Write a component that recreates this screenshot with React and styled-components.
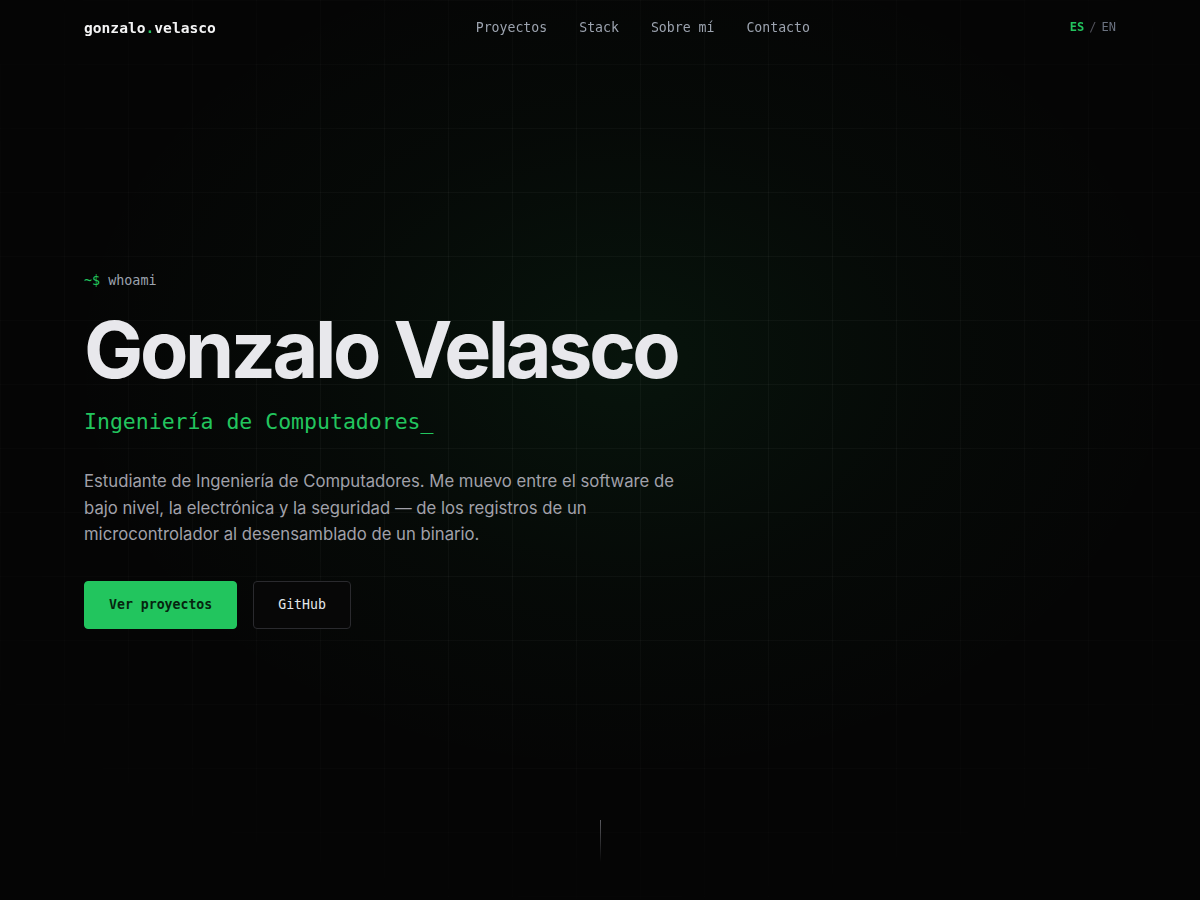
import React from "react";
import styled, { createGlobalStyle } from "styled-components";

const GlobalStyle = createGlobalStyle`
  *, *::before, *::after { box-sizing: border-box; }
  html, body { margin: 0; padding: 0; background: #050505; }
  body {
    font-family: "Inter", "Noto Sans", sans-serif;
    color: #e5e7eb;
    -webkit-font-smoothing: antialiased;
  }
  a { color: inherit; text-decoration: none; }
`;

const MONO = `"DejaVu Sans Mono", "Liberation Mono", monospace`;
const GREEN = "#22c55e";

const Page = styled.div`
  min-height: 100vh;
  background: #050505;
`;

const Header = styled.header`
  position: fixed;
  top: 0;
  left: 0;
  right: 0;
  z-index: 10;
  height: 54px;
  padding: 0 84px;
  display: flex;
  align-items: center;
  justify-content: space-between;
  font-family: ${MONO};
`;

const Logo = styled.a`
  font-size: 14.6px;
  font-weight: 700;
  color: #f4f4f5;
`;

const Dot = styled.span`
  color: ${GREEN};
`;

const Nav = styled.nav`
  display: flex;
  gap: 32px;
`;

const NavLink = styled.a`
  font-size: 13.2px;
  color: #9ca3af;
`;

const Lang = styled.div`
  display: flex;
  gap: 5px;
  font-size: 12px;
  color: #52525b;
`;

const LangItem = styled.span`
  color: ${(p) => (p.$active ? GREEN : "#6b7280")};
  font-weight: ${(p) => (p.$active ? 700 : 400)};
`;

const Hero = styled.section`
  position: relative;
  min-height: 100vh;
  display: flex;
  align-items: center;
  padding: 0 84px;
  overflow: hidden;
  background: radial-gradient(
    ellipse 560px 420px at 52% 40%,
    rgba(34, 197, 94, 0.08),
    rgba(34, 197, 94, 0.025) 55%,
    transparent 100%
  );

  &::before {
    content: "";
    position: absolute;
    inset: 0;
    background-image:
      linear-gradient(to right, rgba(255, 255, 255, 0.035) 1px, transparent 1px),
      linear-gradient(to bottom, rgba(255, 255, 255, 0.035) 1px, transparent 1px);
    background-size: 64px 64px;
    -webkit-mask-image: radial-gradient(ellipse 70% 65% at 50% 42%, #000 35%, transparent 100%);
    mask-image: radial-gradient(ellipse 70% 65% at 50% 42%, #000 35%, transparent 100%);
    pointer-events: none;
  }
`;

const Content = styled.div`
  position: relative;
  z-index: 1;
  display: flex;
  flex-direction: column;
  align-items: flex-start;
`;

const Prompt = styled.div`
  font-family: ${MONO};
  font-size: 13.4px;
  line-height: 20px;
  color: #9ca3af;
  margin-bottom: 16px;
`;

const PromptSign = styled.span`
  color: ${GREEN};
`;

const Title = styled.h1`
  margin: 0 0 16px;
  font-family: "Inter", sans-serif;
  font-weight: 700;
  font-size: 79px;
  line-height: 84px;
  letter-spacing: -0.043em;
  color: #e8e8ec;
`;

const Subtitle = styled.div`
  font-family: ${MONO};
  font-size: 21.5px;
  line-height: 30px;
  color: ${GREEN};
  margin-bottom: 31px;
`;

const Lead = styled.p`
  margin: 0 0 33px;
  max-width: 610px;
  font-size: 16.7px;
  line-height: 26.5px;
  color: #a1a1aa;
`;

const Actions = styled.div`
  display: flex;
  gap: 16px;
`;

const Button = styled.a`
  display: inline-flex;
  align-items: center;
  justify-content: center;
  height: 48px;
  padding: 0 24px;
  border-radius: 4px;
  font-family: ${MONO};
  font-size: 13.2px;
  font-weight: ${(p) => (p.$primary ? 700 : 400)};
  background: ${(p) => (p.$primary ? GREEN : "#070707")};
  color: ${(p) => (p.$primary ? "#06240f" : "#e5e7eb")};
  border: 1px solid ${(p) => (p.$primary ? GREEN : "#2a2a2e")};
`;

const ScrollLine = styled.div`
  position: absolute;
  left: 50%;
  bottom: 38px;
  width: 1px;
  height: 42px;
  background: linear-gradient(to bottom, rgba(160, 160, 170, 0.55), transparent);
`;

export default function App() {
  return (
    <>
      <GlobalStyle />
      <Page>
        <Header>
          <Logo href="#">
            gonzalo<Dot>.</Dot>velasco
          </Logo>
          <Nav>
            <NavLink href="#">Proyectos</NavLink>
            <NavLink href="#">Stack</NavLink>
            <NavLink href="#">Sobre mí</NavLink>
            <NavLink href="#">Contacto</NavLink>
          </Nav>
          <Lang>
            <LangItem $active>ES</LangItem>
            <span>/</span>
            <LangItem>EN</LangItem>
          </Lang>
        </Header>
        <Hero>
          <Content>
            <Prompt>
              <PromptSign>~$</PromptSign> whoami
            </Prompt>
            <Title>Gonzalo Velasco</Title>
            <Subtitle>Ingeniería de Computadores_</Subtitle>
            <Lead>
              Estudiante de Ingeniería de Computadores. Me muevo entre el software de bajo nivel,
              la electrónica y la seguridad — de los registros de un microcontrolador al
              desensamblado de un binario.
            </Lead>
            <Actions>
              <Button $primary href="#">Ver proyectos</Button>
              <Button href="#">GitHub</Button>
            </Actions>
          </Content>
          <ScrollLine />
        </Hero>
      </Page>
    </>
  );
}
